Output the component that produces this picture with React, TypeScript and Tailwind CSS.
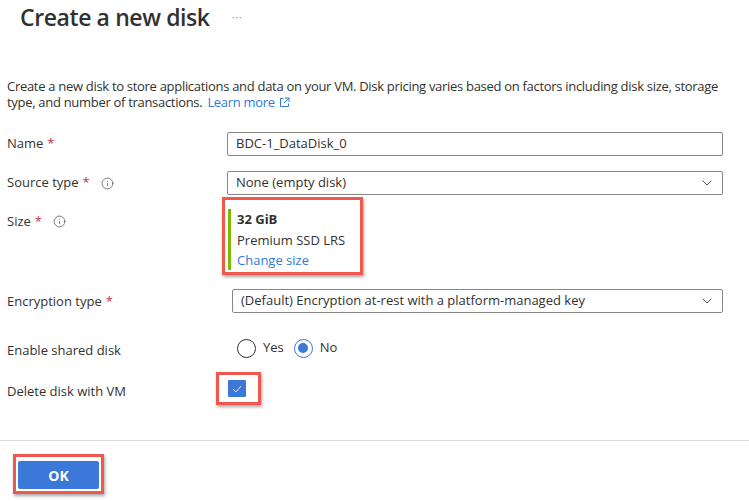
import { ChevronDown, Info } from 'lucide-react'

function Req() {
  return <span className="text-[#c4314b] ml-1">*</span>
}

function InfoIcon() {
  return <Info size={13} strokeWidth={1.5} className="ml-[11px] text-[#605e5c]" />
}

function Dropdown({ value }: { value: string }) {
  return (
    <div className="h-[24px] flex-1 flex items-center justify-between border border-[#8a8886] rounded-[2px] pl-[8px] pr-[7px]">
      <span>{value}</span>
      <ChevronDown size={16} strokeWidth={1.3} className="text-[#323130]" />
    </div>
  )
}

export default function App() {
  return (
    <div
      className="w-[749px] h-[501px] bg-white overflow-hidden text-[13px] text-[#323130] flex flex-col"
      style={{ fontFamily: '"Open Sans", "Noto Sans", sans-serif' }}
    >
      {/* Header */}
      <div className="flex items-center pl-[20px] pt-[1px] h-[34px]">
        <h1 className="text-[23px] font-semibold tracking-[-0.4px] text-[#323130]">Create a new disk</h1>
        <span className="ml-[22px] text-[10px] text-[#8a8886] tracking-[1px]">···</span>
      </div>

      {/* Description */}
      <p className="mt-[44px] px-[7px] leading-[16px] tracking-[-0.3px]">
        Create a new disk to store applications and data on your VM. Disk pricing varies based on factors including disk size, storage
        type, and number of transactions.
        <span className="text-[#2f7ad6] whitespace-nowrap ml-[5px]">Learn more</span>
        <svg width="11" height="11" viewBox="0 0 11 11" className="inline-block ml-[4px] align-[-1px]" fill="none" stroke="#2f7ad6" strokeWidth="1">
          <path d="M4.5 1.5H1.5V9.5H9.5V6.5" />
          <path d="M6 1H10V5M10 1L5 6" />
        </svg>
      </p>

      {/* Name */}
      <div className="flex items-center mt-[22px] pl-[7px] pr-[26px] h-[24px]">
        <div className="w-[220px] flex items-center">
          Name
          <Req />
        </div>
        <div className="h-[24px] flex-1 flex items-center border border-[#8a8886] rounded-[2px] pl-[8px]">BDC-1_DataDisk_0</div>
      </div>

      {/* Source type */}
      <div className="flex items-center mt-[15px] pl-[7px] pr-[26px] h-[24px]">
        <div className="w-[220px] flex items-center">
          Source type
          <Req />
          <InfoIcon />
        </div>
        <Dropdown value="None (empty disk)" />
      </div>

      {/* Size */}
      <div className="flex items-start mt-[2px] pl-[7px]">
        <div className="w-[215px] flex items-center mt-[15px]">
          Size
          <Req />
          <InfoIcon />
        </div>
        <div className="w-[141px] h-[78px] border-[3px] border-[#f0584e] shadow-[1px_2px_3px_rgba(0,0,0,0.35)] pl-[3px] pt-[9px]">
          <div className="border-l-[3px] border-[#7fba00] pl-[6px] leading-[20.5px] h-[61px]">
            <div className="font-bold">32 GiB</div>
            <div>Premium SSD LRS</div>
            <div className="text-[#2f7ad6]">Change size</div>
          </div>
        </div>
      </div>

      {/* Encryption */}
      <div className="flex items-center mt-[14px] pl-[7px] pr-[26px] h-[24px]">
        <div className="w-[225px] flex items-center pt-[2px]">
          Encryption type
          <Req />
        </div>
        <Dropdown value="(Default) Encryption at-rest with a platform-managed key" />
      </div>

      {/* Shared disk */}
      <div className="flex items-center mt-[23px] pl-[7px] h-[24px]">
        <div className="w-[230px] pt-[6px]">Enable shared disk</div>
        <div className="flex items-center">
          <span className="w-[19px] h-[19px] rounded-full border border-[#323130]" />
          <span className="ml-[7px]">Yes</span>
          <span className="ml-[10px] w-[19px] h-[19px] rounded-full border border-[#3b78d8] flex items-center justify-center">
            <span className="w-[10px] h-[10px] rounded-full bg-[#3b78d8]" />
          </span>
          <span className="ml-[7px]">No</span>
        </div>
      </div>

      {/* Delete with VM */}
      <div className="flex items-center mt-[12px] pl-[7px] h-[33px]">
        <div className="w-[209px] pt-[6px]">Delete disk with VM</div>
        <div className="w-[45px] h-[33px] border-[3px] border-[#f0584e] shadow-[1px_2px_3px_rgba(0,0,0,0.35)] flex items-center pl-[9px]">
          <span className="w-[18px] h-[17px] bg-[#3b78d8] flex items-center justify-center rounded-[1px]">
            <svg width="10" height="8" viewBox="0 0 10 8" fill="none" stroke="#dbe6f7" strokeWidth="1">
              <path d="M1 4L4 7L9 1" />
            </svg>
          </span>
        </div>
      </div>

      {/* Footer */}
      <div className="mt-[35px] border-t border-[#dcdcdc]" />
      <div className="pl-[13px] mt-[13px]">
        <div className="w-[91px] h-[40px] border-[3px] border-[#f0584e] shadow-[1px_2px_3px_rgba(0,0,0,0.35)] p-[2px] pt-[4px] bg-white">
          <button className="w-full h-full bg-[#3b78d8] text-white font-bold text-[14px] rounded-[2px]">OK</button>
        </div>
      </div>
    </div>
  )
}
